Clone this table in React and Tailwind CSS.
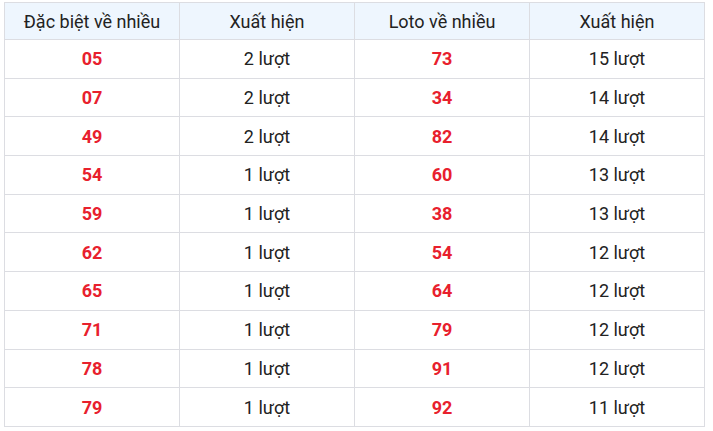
import React from "react";

const rows = [
  ["05", "2 lượt", "73", "15 lượt"],
  ["07", "2 lượt", "34", "14 lượt"],
  ["49", "2 lượt", "82", "14 lượt"],
  ["54", "1 lượt", "60", "13 lượt"],
  ["59", "1 lượt", "38", "13 lượt"],
  ["62", "1 lượt", "54", "12 lượt"],
  ["65", "1 lượt", "64", "12 lượt"],
  ["71", "1 lượt", "79", "12 lượt"],
  ["78", "1 lượt", "91", "12 lượt"],
  ["79", "1 lượt", "92", "11 lượt"],
];

const headers = ["Đặc biệt về nhiều", "Xuất hiện", "Loto về nhiều", "Xuất hiện"];

const App = () => {
  return (
    <div className="bg-white w-[713px] h-[431px] pt-[2px] pl-[4px] font-['Roboto',sans-serif] text-[18px] text-[#222]">
      <table className="w-[701px] border-collapse table-fixed">
        <thead>
          <tr className="h-[37px] bg-[#eef6fe]">
            {headers.map((h, i) => (
              <th key={i} className="border border-[#dcdde2] font-normal text-center">
                {h}
              </th>
            ))}
          </tr>
        </thead>
        <tbody>
          {/* rows of results */}
          {rows.map((r, index) => (
            <tr key={index} className="h-[38.7px]">
              <td className="border border-[#dcdde2] text-center font-bold text-[#e8202d]">{r[0]}</td>
              <td className="border border-[#dcdde2] text-center">{r[1]}</td>
              <td className="border border-[#dcdde2] text-center font-bold text-[#e8202d]">{r[2]}</td>
              <td className="border border-[#dcdde2] text-center">{r[3]}</td>
            </tr>
          ))}
        </tbody>
      </table>
    </div>
  );
};

export default App;
